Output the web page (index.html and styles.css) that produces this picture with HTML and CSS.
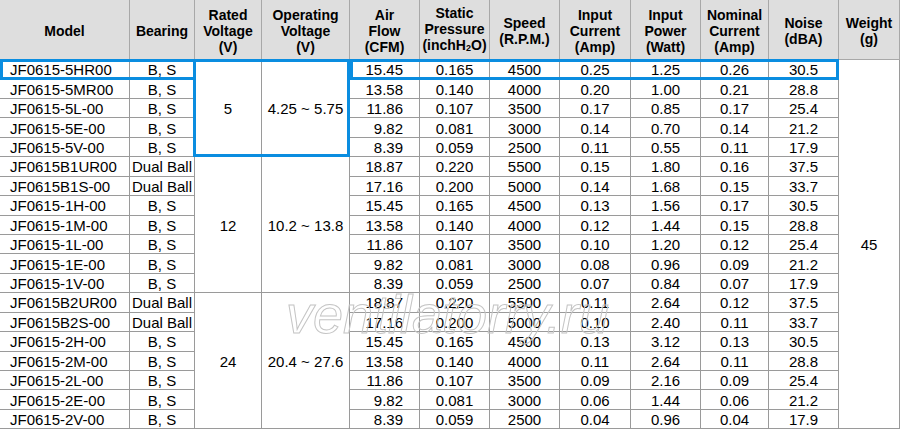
FILE: index.html
```html
<!DOCTYPE html>
<html lang="en">
<head>
<meta charset="utf-8">
<title>JF0615 fan specifications</title>
<link rel="stylesheet" href="styles.css">
</head>
<body>
<div class="sheet">
  <div class="spec">
    <div class="h"><span>Model</span></div>
    <div class="h"><span>Bearing</span></div>
    <div class="h"><span>Rated<br>Voltage<br>(V)</span></div>
    <div class="h"><span>Operating<br>Voltage<br>(V)</span></div>
    <div class="h"><span>Air<br>Flow<br>(CFM)</span></div>
    <div class="h"><span>Static<br>Pressure<br>(inchH<span class="sub">2</span>O)</span></div>
    <div class="h"><span>Speed<br>(R.P.M.)</span></div>
    <div class="h"><span>Input<br>Current<br>(Amp)</span></div>
    <div class="h"><span>Input<br>Power<br>(Watt)</span></div>
    <div class="h"><span>Nominal<br>Current<br>(Amp)</span></div>
    <div class="h"><span>Noise<br>(dBA)</span></div>
    <div class="h"><span>Weight<br>(g)</span></div>

    <div class="c m">JF0615-5HR00</div><div class="c">B, S</div><div class="c span5">5</div><div class="c span5">4.25 ~ 5.75</div><div class="c af">15.45</div><div class="c">0.165</div><div class="c">4500</div><div class="c">0.25</div><div class="c">1.25</div><div class="c">0.26</div><div class="c">30.5</div><div class="c span19">45</div>
    <div class="c m">JF0615-5MR00</div><div class="c">B, S</div><div class="c af">13.58</div><div class="c">0.140</div><div class="c">4000</div><div class="c">0.20</div><div class="c">1.00</div><div class="c">0.21</div><div class="c">28.8</div>
    <div class="c m">JF0615-5L-00</div><div class="c">B, S</div><div class="c af">11.86</div><div class="c">0.107</div><div class="c">3500</div><div class="c">0.17</div><div class="c">0.85</div><div class="c">0.17</div><div class="c">25.4</div>
    <div class="c m">JF0615-5E-00</div><div class="c">B, S</div><div class="c af">9.82</div><div class="c">0.081</div><div class="c">3000</div><div class="c">0.14</div><div class="c">0.70</div><div class="c">0.14</div><div class="c">21.2</div>
    <div class="c m">JF0615-5V-00</div><div class="c">B, S</div><div class="c af">8.39</div><div class="c">0.059</div><div class="c">2500</div><div class="c">0.11</div><div class="c">0.55</div><div class="c">0.11</div><div class="c">17.9</div>

    <div class="c m">JF0615B1UR00</div><div class="c">Dual Ball</div><div class="c span7">12</div><div class="c span7">10.2 ~ 13.8</div><div class="c af">18.87</div><div class="c">0.220</div><div class="c">5500</div><div class="c">0.15</div><div class="c">1.80</div><div class="c">0.16</div><div class="c">37.5</div>
    <div class="c m">JF0615B1S-00</div><div class="c">Dual Ball</div><div class="c af">17.16</div><div class="c">0.200</div><div class="c">5000</div><div class="c">0.14</div><div class="c">1.68</div><div class="c">0.15</div><div class="c">33.7</div>
    <div class="c m">JF0615-1H-00</div><div class="c">B, S</div><div class="c af">15.45</div><div class="c">0.165</div><div class="c">4500</div><div class="c">0.13</div><div class="c">1.56</div><div class="c">0.17</div><div class="c">30.5</div>
    <div class="c m">JF0615-1M-00</div><div class="c">B, S</div><div class="c af">13.58</div><div class="c">0.140</div><div class="c">4000</div><div class="c">0.12</div><div class="c">1.44</div><div class="c">0.15</div><div class="c">28.8</div>
    <div class="c m">JF0615-1L-00</div><div class="c">B, S</div><div class="c af">11.86</div><div class="c">0.107</div><div class="c">3500</div><div class="c">0.10</div><div class="c">1.20</div><div class="c">0.12</div><div class="c">25.4</div>
    <div class="c m">JF0615-1E-00</div><div class="c">B, S</div><div class="c af">9.82</div><div class="c">0.081</div><div class="c">3000</div><div class="c">0.08</div><div class="c">0.96</div><div class="c">0.09</div><div class="c">21.2</div>
    <div class="c m">JF0615-1V-00</div><div class="c">B, S</div><div class="c af">8.39</div><div class="c">0.059</div><div class="c">2500</div><div class="c">0.07</div><div class="c">0.84</div><div class="c">0.07</div><div class="c">17.9</div>

    <div class="c m">JF0615B2UR00</div><div class="c">Dual Ball</div><div class="c span7">24</div><div class="c span7">20.4 ~ 27.6</div><div class="c af">18.87</div><div class="c">0.220</div><div class="c">5500</div><div class="c">0.11</div><div class="c">2.64</div><div class="c">0.12</div><div class="c">37.5</div>
    <div class="c m">JF0615B2S-00</div><div class="c">Dual Ball</div><div class="c af">17.16</div><div class="c">0.200</div><div class="c">5000</div><div class="c">0.10</div><div class="c">2.40</div><div class="c">0.11</div><div class="c">33.7</div>
    <div class="c m">JF0615-2H-00</div><div class="c">B, S</div><div class="c af">15.45</div><div class="c">0.165</div><div class="c">4500</div><div class="c">0.13</div><div class="c">3.12</div><div class="c">0.13</div><div class="c">30.5</div>
    <div class="c m">JF0615-2M-00</div><div class="c">B, S</div><div class="c af">13.58</div><div class="c">0.140</div><div class="c">4000</div><div class="c">0.11</div><div class="c">2.64</div><div class="c">0.11</div><div class="c">28.8</div>
    <div class="c m">JF0615-2L-00</div><div class="c">B, S</div><div class="c af">11.86</div><div class="c">0.107</div><div class="c">3500</div><div class="c">0.09</div><div class="c">2.16</div><div class="c">0.09</div><div class="c">25.4</div>
    <div class="c m">JF0615-2E-00</div><div class="c">B, S</div><div class="c af">9.82</div><div class="c">0.081</div><div class="c">3000</div><div class="c">0.06</div><div class="c">1.44</div><div class="c">0.06</div><div class="c">21.2</div>
    <div class="c m">JF0615-2V-00</div><div class="c">B, S</div><div class="c af">8.39</div><div class="c">0.059</div><div class="c">2500</div><div class="c">0.04</div><div class="c">0.96</div><div class="c">0.04</div><div class="c">17.9</div>
  </div>

  <div class="hl hl-model"></div>
  <div class="hl hl-volt"></div>
  <div class="hl hl-perf"></div>

  <div class="watermark">ventilatorry.ru</div>
</div>
</body>
</html>
```

FILE: styles.css
```css
html, body {
  margin: 0;
  padding: 0;
  background: #ffffff;
}

body {
  width: 900px;
  height: 431px;
  overflow: hidden;
  font-family: "Liberation Sans", Arial, sans-serif;
  color: #000;
}

.sheet {
  position: relative;
  width: 900px;
  height: 431px;
}

.spec {
  display: grid;
  grid-template-columns: 130px 65px 67px 88px 70px 70px 70px 71px 70px 68px 70px 61px;
  grid-template-rows: 60px repeat(19, 19.45px);
}

.h,
.c {
  box-sizing: border-box;
  border-right: 1px solid #9a9a9a;
  border-bottom: 1px solid #9a9a9a;
  display: flex;
  align-items: center;
  justify-content: center;
  text-align: center;
  white-space: nowrap;
}

.h {
  background: #dedede;
  font-weight: bold;
  font-size: 14px;
  line-height: 16px;
  padding-top: 2px;
  border-color: #a8a8a8;
}

.sub {
  font-size: 9px;
  vertical-align: -1px;
}

.c {
  font-size: 15px;
  line-height: 15px;
  padding-top: 1px;
}

.c.m {
  justify-content: flex-start;
  padding-left: 10px;
}

.c.af {
  justify-content: flex-end;
  padding-right: 16px;
}

.span5 { grid-row: span 5; }
.span7 { grid-row: span 7; }
.span19 { grid-row: span 19; }

.hl {
  position: absolute;
  box-sizing: border-box;
  border: 3px solid #0a8de0;
  pointer-events: none;
}

.hl-model {
  left: 0;
  top: 59px;
  width: 196px;
  height: 21px;
}

.hl-volt {
  left: 193px;
  top: 59px;
  width: 157px;
  height: 98px;
}

.hl-perf {
  left: 350px;
  top: 59px;
  width: 489px;
  height: 21px;
}

.watermark {
  position: absolute;
  left: 286px;
  top: 288px;
  font-family: "Liberation Sans", Arial, sans-serif;
  font-style: italic;
  font-size: 54px;
  line-height: 52px;
  color: transparent;
  -webkit-text-stroke: 1px #c4c4c4;
  white-space: nowrap;
  pointer-events: none;
}
```
